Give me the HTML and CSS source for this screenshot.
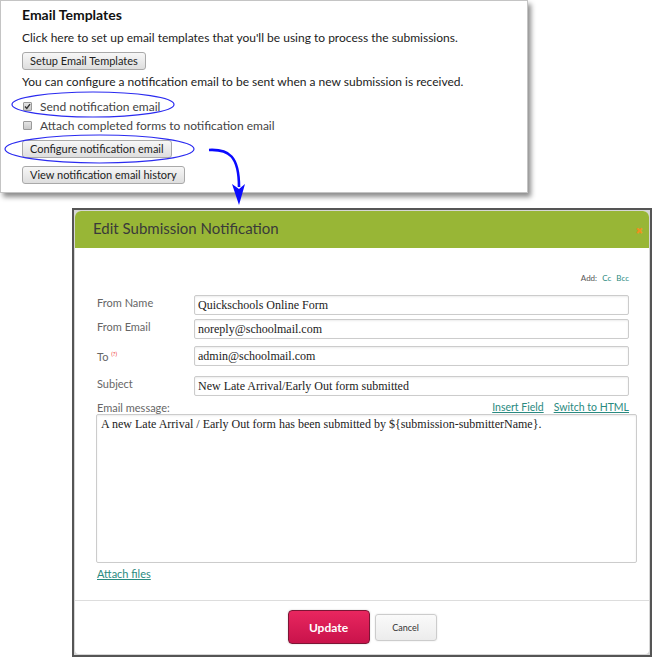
FILE: index.html
```html
<!DOCTYPE html>
<html lang="en">
<head>
    <meta charset="UTF-8">
    <title>Email Templates</title>
    <link rel="stylesheet" href="styles.css">
</head>
<body>
    <div class="panel">
        <h1>Email Templates</h1>
        <p class="intro">Click here to set up email templates that you'll be using to process the submissions.</p>
        <button class="btn btn-first">Setup Email Templates</button>
        <p class="note">You can configure a notification email to be sent when a new submission is received.</p>
        <div class="check check-first">
            <span class="box checked">
                <svg width="7" height="7" viewBox="0 0 7 7"><path d="M1 3.6 L2.8 5.4 L6 1.2" fill="none" stroke="#333" stroke-width="1.4"/></svg>
            </span>
            Send notification email
        </div>
        <div class="check check-second">
            <span class="box"></span>
            Attach completed forms to notification email
        </div>
        <button class="btn btn-config">Configure notification email</button>
        <button class="btn btn-history">View notification email history</button>
    </div>

    <div class="frame">
        <div class="dialog">
            <div class="dlg-head">
                <span class="dlg-title">Edit Submission Notification</span>
                <span class="dlg-close">&#x2716;</span>
            </div>
            <div class="dlg-body">
                <div class="add-row">Add: <a href="#">Cc</a> <a href="#">Bcc</a></div>

                <div class="field field-1">
                    <label>From Name</label>
                    <div class="input">Quickschools Online Form</div>
                </div>
                <div class="field field-2">
                    <label>From Email</label>
                    <div class="input">noreply@schoolmail.com</div>
                </div>
                <div class="field field-3">
                    <label>To <sup class="help">(?)</sup></label>
                    <div class="input">admin@schoolmail.com</div>
                </div>
                <div class="field field-4">
                    <label>Subject</label>
                    <div class="input">New Late Arrival/Early Out form submitted</div>
                </div>

                <div class="msg-row">
                    <span>Email message:</span>
                    <span class="msg-links"><a href="#">Insert Field</a><a href="#">Switch to HTML</a></span>
                </div>
                <div class="message">A new Late Arrival / Early Out form has been submitted by ${submission-submitterName}.</div>
                <a href="#" class="attach">Attach files</a>
            </div>
            <div class="dlg-foot">
                <button class="btn-update">Update</button>
                <button class="btn-cancel">Cancel</button>
            </div>
        </div>
    </div>

    <!-- annotations drawn over the screenshot -->
    <svg class="marks" width="655" height="662" viewBox="0 0 655 662">
        <ellipse cx="93" cy="104.5" rx="81" ry="12.5" fill="none" stroke="#2b2bf0" stroke-width="1.2"/>
        <ellipse cx="99.5" cy="149" rx="94.5" ry="14" fill="none" stroke="#2b2bf0" stroke-width="1.2"/>
        <path d="M209 150 C 229 149, 239 156, 239 187" fill="none" stroke="#0a0aff" stroke-width="2.6"/>
        <path d="M232 184 L239 189 L245 184 L239 205 Z" fill="#0a0aff"/>
    </svg>
</body>
</html>
```

FILE: styles.css
```css
body{
    margin: 0;
    background: #fff;
    font-family: Lato, "Liberation Sans", sans-serif;
    color: #222;
    position: relative;
    width: 655px;
    height: 662px;
    overflow: hidden;
}

/* top panel */
.panel{
    width: 528px;
    box-sizing: border-box;
    border: 1px solid #c4c4c4;
    box-shadow: 3px 4px 5px rgba(0, 0, 0, 0.45);
    padding: 5px 0 8px 21px;
    display: flex;
    flex-direction: column;
    align-items: flex-start;
    background: #fff;
}
.panel h1{
    margin: 0;
    font-size: 14px;
    line-height: 18px;
    font-weight: bold;
    color: #111;
}
.panel p{
    margin: 0;
    font-size: 12px;
    line-height: 16px;
}
.intro{ margin-top: 6px !important; }
.note{ margin-top: 4px !important; }
.btn{
    height: 18px;
    padding: 0 7px;
    font-family: inherit;
    font-size: 11px;
    color: #222;
    border: 1px solid #a9a9a9;
    border-radius: 3px;
    background: linear-gradient(#f7f7f7, #dedede);
    line-height: 16px;
}
.btn-first{ margin-top: 6px; }
.btn-config{ margin-top: 7px; }
.btn-history{ margin-top: 8px; }
.check{
    display: flex;
    align-items: center;
    height: 16px;
    font-size: 12px;
    color: #444;
}
.check-first{ margin-top: 8px; }
.check-second{ margin-top: 3px; }
.box{
    width: 7px;
    height: 7px;
    border: 1px solid #9a9a9a;
    border-radius: 1px;
    background: linear-gradient(#e4e4e4, #c9c9c9);
    margin: 0 8px 0 1px;
    display: flex;
    align-items: center;
    justify-content: center;
}

/* dialog */
.frame{
    margin: 15px 0 0 72px;
    width: 580px;
    height: 449px;
    box-sizing: border-box;
    border: 2px solid #555;
    padding: 1px;
    background: #d6d6d6;
}
.dialog{
    height: 100%;
    background: #fff;
    border-radius: 6px 6px 4px 4px;
    overflow: hidden;
    display: flex;
    flex-direction: column;
}
.dlg-head{
    height: 37px;
    flex: none;
    box-sizing: border-box;
    background: #98b636;
    display: flex;
    align-items: center;
    justify-content: space-between;
    padding: 0 6px 3px 18px;
}
.dlg-title{
    font-size: 15px;
    color: #3a3a3a;
}
.dlg-close{
    color: #f0901e;
    font-size: 9px;
    margin-top: 6px;
    font-family: "DejaVu Sans", sans-serif;
}
.dlg-body{
    flex: 1;
    padding: 24px 20px 0 22px;
    display: flex;
    flex-direction: column;
}
.add-row{
    text-align: right;
    font-size: 8px;
    line-height: 12px;
    color: #555;
}
.add-row a{
    color: #2a8a80;
    text-decoration: none;
    margin-left: 3px;
}
.field{
    display: flex;
    align-items: flex-start;
}
.field-1{ margin-top: 11px; }
.field-2{ margin-top: 4px; }
.field-3{ margin-top: 7px; }
.field-4{ margin-top: 10px; }
.field label{
    width: 97px;
    flex: none;
    font-size: 11px;
    line-height: 14px;
    padding-top: 1px;
    color: #666;
}
.help{
    color: #e33;
    font-size: 6px;
    vertical-align: 5px;
}
.input{
    flex: 1;
    height: 20px;
    box-sizing: border-box;
    border: 1px solid #ccc;
    border-radius: 2px;
    box-shadow: inset 0 1px 2px rgba(0, 0, 0, 0.08);
    padding: 0 3px;
    font-family: "Liberation Serif", serif;
    font-size: 12px;
    line-height: 18px;
    color: #222;
}
.msg-row{
    margin-top: 5px;
    display: flex;
    justify-content: space-between;
    font-size: 11px;
    line-height: 13px;
    color: #666;
}
.msg-links{
    font-size: 10.5px;
}
.msg-links a{
    color: #2a8a80;
    margin-left: 10px;
}
.message{
    margin: 0 -8px 0 -1px;
    height: 149px;
    box-sizing: border-box;
    border: 1px solid #ccc;
    border-radius: 2px;
    box-shadow: inset 0 1px 2px rgba(0, 0, 0, 0.08);
    padding: 2px 4px;
    font-family: "Liberation Serif", serif;
    font-size: 12px;
    line-height: 15px;
    color: #222;
}
.attach{
    margin-top: 4px;
    align-self: flex-start;
    font-size: 11px;
    line-height: 14px;
    color: #2a8a80;
}
.dlg-foot{
    height: 54px;
    flex: none;
    box-sizing: border-box;
    border-top: 1px solid #ddd;
    padding-top: 9px;
    display: flex;
    justify-content: center;
    align-items: flex-start;
    gap: 5px;
}
.btn-update{
    width: 82px;
    height: 34px;
    border: 1px solid #7c1535;
    border-radius: 4px;
    background: linear-gradient(#e8265f, #c9134b);
    color: #fff;
    font-family: inherit;
    font-weight: bold;
    font-size: 12px;
    box-shadow: 0 0 2px rgba(0, 0, 0, 0.2);
}
.btn-cancel{
    margin-top: 4px;
    width: 62px;
    height: 27px;
    border: 1px solid #ccc;
    border-radius: 3px;
    background: linear-gradient(#fafafa, #ececec);
    color: #333;
    font-family: inherit;
    font-size: 9px;
    box-shadow: 0 0 2px rgba(0, 0, 0, 0.12);
}

.marks{
    position: absolute;
    left: 0;
    top: 0;
    pointer-events: none;
}
```
